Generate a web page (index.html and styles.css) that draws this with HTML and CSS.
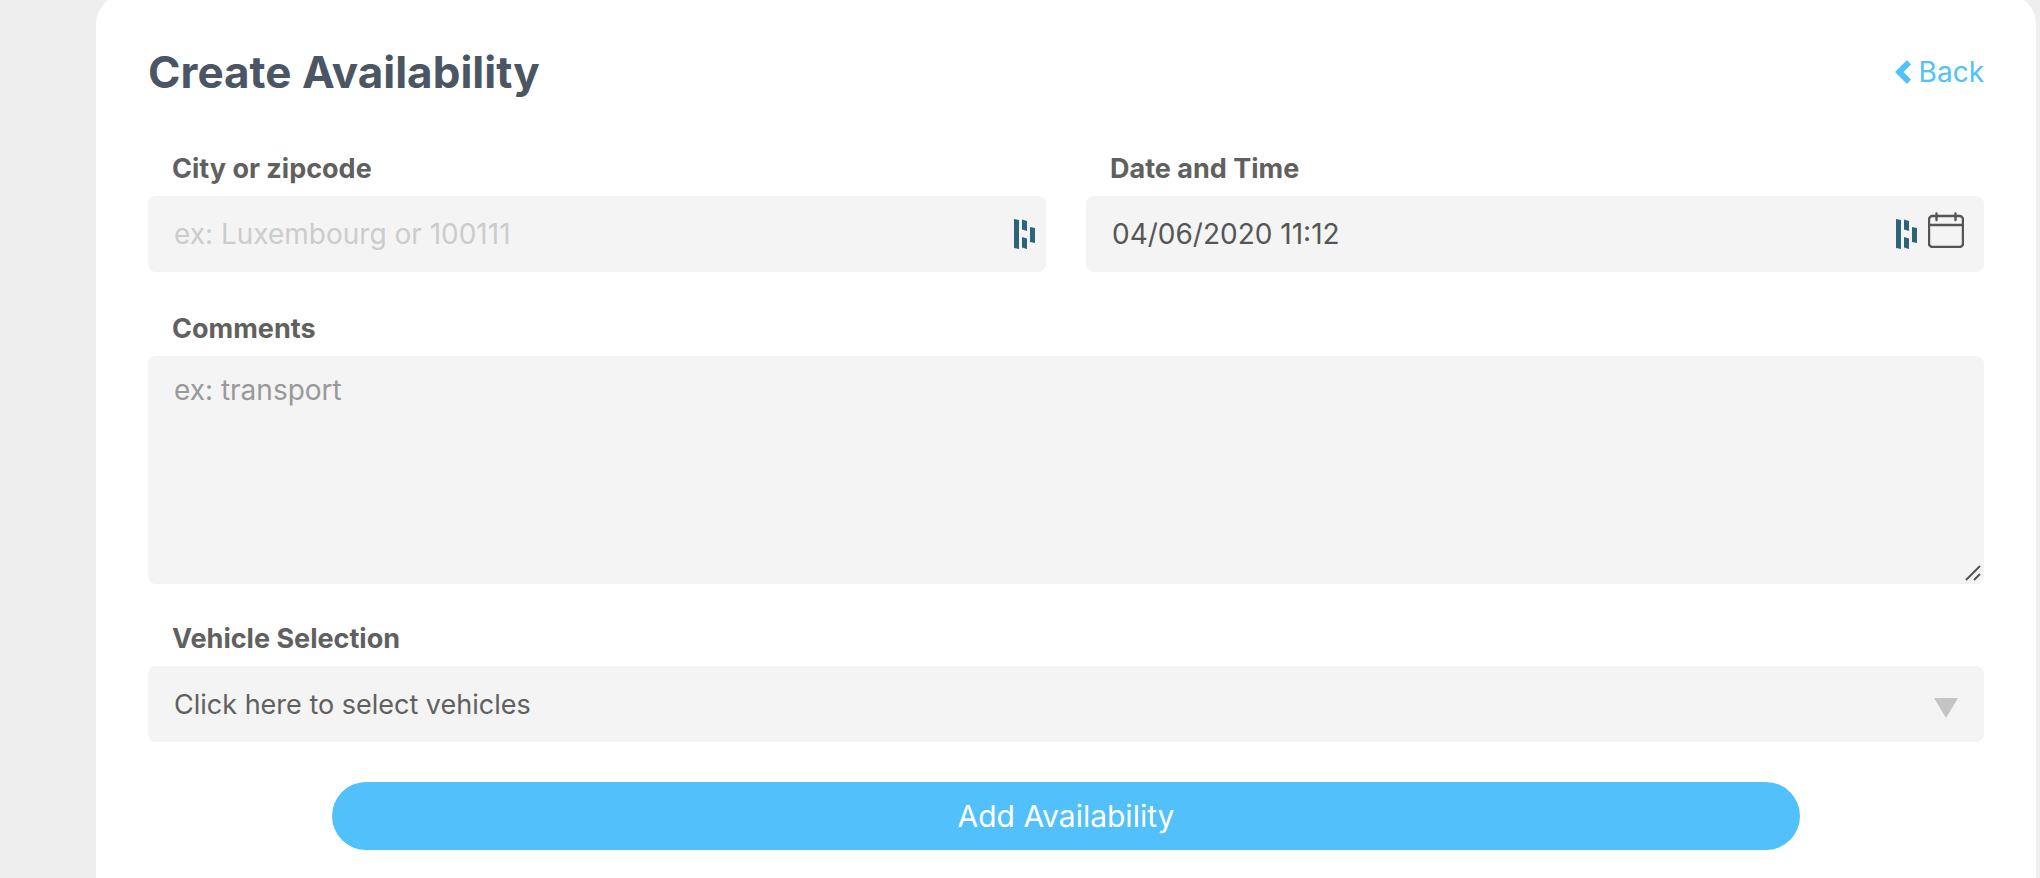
FILE: index.html
```html
<!DOCTYPE html>
<html lang="en">
<head>
    <meta charset="UTF-8">
    <meta name="viewport" content="width=device-width, initial-scale=1">
    <title>Create Availability</title>
    <link rel="stylesheet" href="styles.css">
</head>
<body>
    <main class="card">
        <div class="card-header">
            <h1>Create Availability</h1>
            <a class="back-link" href="#">
                <svg class="back-icon" viewBox="0 0 16 24" aria-hidden="true">
                    <path d="M12 0 16 4.500 8.500 12 16 19.500 12 24 0 12Z" fill="currentColor"/>
                </svg>
                Back
            </a>
        </div>

        <form class="availability-form">
            <div class="form-row">
                <div class="form-group">
                    <label for="city">City or zipcode</label>
                    <div class="field">
                        <input type="text" id="city" placeholder="ex: Luxembourg or 100111">
                        <div class="field-icons">
                            <svg class="manager-icon" viewBox="0 0 21 30" aria-hidden="true">
                                <path d="M0 0 5 1V30L0 29ZM8 .5 13 2V12L8 10.500ZM8 18 13 19.500V30L8 28.500ZM16 8 21 9V24L16 23Z"/>
                            </svg>
                        </div>
                    </div>
                </div>
                <div class="form-group">
                    <label for="date">Date and Time</label>
                    <div class="field">
                        <input type="text" id="date" value="04/06/2020 11:12">
                        <div class="field-icons field-icons-date">
                            <svg class="manager-icon" viewBox="0 0 21 30" aria-hidden="true">
                                <path d="M0 0 5 1V30L0 29ZM8 .5 13 2V12L8 10.500ZM8 18 13 19.500V30L8 28.500ZM16 8 21 9V24L16 23Z"/>
                            </svg>
                            <svg class="calendar-icon" viewBox="0 0 36 36" aria-hidden="true">
                                <rect x="1" y="4" width="34" height="31" rx="3.500"/>
                                <path d="M1 13H35M8.500 1.500V8M27.500 1.500V8"/>
                            </svg>
                        </div>
                    </div>
                </div>
            </div>

            <div class="form-group form-comments">
                <label for="comments">Comments</label>
                <div class="field">
                    <textarea id="comments" placeholder="ex: transport"></textarea>
                    <svg class="resize-icon" viewBox="0 0 16 16" aria-hidden="true">
                        <path d="M1 15 15 1M9 15 15 9"/>
                    </svg>
                </div>
            </div>

            <div class="form-group form-vehicles">
                <label for="vehicles">Vehicle Selection</label>
                <div class="field">
                    <select id="vehicles">
                        <option>Click here to select vehicles</option>
                    </select>
                    <svg class="arrow-icon" viewBox="0 0 24 20" aria-hidden="true">
                        <path d="M0 0H24L12 20Z"/>
                    </svg>
                </div>
            </div>

            <button type="submit">Add Availability</button>
        </form>
    </main>
</body>
</html>
```
FILE: styles.css
```css
* {
    box-sizing: border-box;
    margin: 0;
    padding: 0;
}

body {
    font-family: Inter, "Open Sans", sans-serif;
    background: #eee;
    color: #555;
    overflow-x: hidden;
}

/* Card */
.card {
    min-height: calc(100vh + 6px);
    margin: -6px 4px 0 96px;
    padding: 50px 52px 28px;
    background: #fff;
    border-radius: 30px 30px 0 0;
}

.card-header {
    display: flex;
    align-items: center;
    justify-content: space-between;
    margin-bottom: 52px;
}

.card-header h1 {
    font-size: 44px;
    line-height: 56px;
    color: #4a5663;
}

.back-link {
    display: flex;
    align-items: center;
    gap: 8px;
    font-size: 28px;
    line-height: 34px;
    color: #52c0fa;
    text-decoration: none;
}

.back-icon {
    width: 16px;
    height: 24px;
}

/* Form */
.form-row {
    display: grid;
    grid-template-columns: 1fr 1fr;
    gap: 40px;
    margin-bottom: 40px;
}

.form-comments {
    margin-bottom: 38px;
}

.form-vehicles {
    margin-bottom: 40px;
}

label {
    display: block;
    margin: 0 24px 10px;
    font-size: 27px;
    font-weight: 700;
    line-height: 34px;
    color: #606060;
}

/* Control and its icons share one grid cell */
.field {
    display: grid;
    align-items: center;
    background: #f4f4f4;
    border-radius: 8px;
}

.field > * {
    grid-area: 1 / 1;
}

input,
textarea,
select {
    width: 100%;
    padding: 0 26px;
    border: none;
    border-radius: 8px;
    background: transparent;
    font-family: inherit;
    font-size: 28px;
    color: #555;
    appearance: none;
}

input,
select {
    height: 76px;
}

select {
    font-size: 27px;
    color: #606060;
}

textarea {
    display: block;
    height: 228px;
    padding-top: 16px;
    line-height: 36px;
    resize: none;
}

input::placeholder {
    color: #ccc;
}

textarea::placeholder {
    color: #999;
}

/* Icons */
.field-icons {
    display: flex;
    align-items: flex-end;
    justify-self: end;
    gap: 11px;
    padding-right: 11px;
    pointer-events: none;
}

.field-icons-date {
    padding: 0 20px 7px 0;
}

.manager-icon {
    width: 21px;
    height: 30px;
    fill: #2c6478;
}

.calendar-icon {
    width: 36px;
    height: 36px;
    margin-bottom: 1px;
    fill: none;
    stroke: #555;
    stroke-width: 2.4;
    stroke-linecap: round;
}

.resize-icon {
    place-self: end;
    width: 16px;
    height: 16px;
    margin: 0 3px 3px 0;
    fill: none;
    stroke: #555;
    stroke-width: 2;
    pointer-events: none;
}

.arrow-icon {
    justify-self: end;
    width: 24px;
    height: 20px;
    margin: 8px 26px 0 0;
    fill: #c4c4c4;
    pointer-events: none;
}

/* Submit */
button {
    display: block;
    width: 80%;
    height: 68px;
    margin: 0 auto;
    border: none;
    border-radius: 34px;
    background: #52c0fa;
    color: #fff;
    font-family: inherit;
    font-size: 30px;
    cursor: pointer;
}
```
